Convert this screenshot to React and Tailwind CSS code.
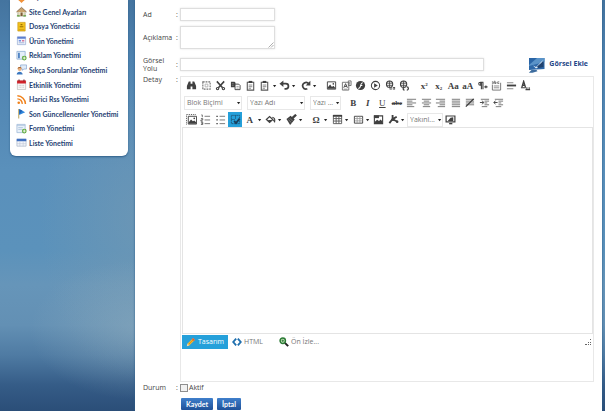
import React from "react";

const Svg = ({ children, className = "h-3 w-3" }) => (
  <svg viewBox="0 0 12 12" className={className + " shrink-0"} fill="none" stroke="none" aria-hidden="true">
    {children}
  </svg>
);

const D = "#404040";
const G = "#8a8a8a";

/* Sidebar icons */
const menuIcons = {
  page: <path d="M3 3h6v6l-3 3-3-3z" fill="#f0913a" />,
  home: (
    <>
      <path d="M2 6h8v5H2z" fill="#e6dfc4" stroke="#8a8a6a" strokeWidth=".6" />
      <path d="M.5 6.500 6 1.500l5.500 5" fill="#c9a36b" stroke="#8a6a4a" strokeWidth="1" />
      <path d="M5 7h2.200v4H5z" fill="#7d5b36" />
      <path d="M1 10h3v1.500H1zM8 10h3v1.500H8z" fill="#5f9e3e" />
    </>
  ),
  cabinet: (
    <>
      <path d="M2 1.500h8v9.500H2z" fill="#f2c11d" stroke="#c8930a" strokeWidth=".7" />
      <path d="M3 9.500h6" stroke="#c8930a" strokeWidth=".8" />
      <path d="M5 3.200h2v1.300H5zM4 5.700h4v1H4z" fill="#9a7000" />
    </>
  ),
  product: (
    <>
      <path d="M1.500 2h9v8.500h-9z" fill="#eef3fb" stroke="#8fa4cf" strokeWidth=".7" />
      <path d="M1.500 2h9v2h-9z" fill="#5c7fd0" />
      <path d="M3 5.500h2.500V7H3z" fill="#6f8fe0" />
      <path d="M6.500 5.500H9V7H6.500z" fill="#d77a9a" />
      <path d="M3 8h6v1H3z" fill="#a9b8d8" />
    </>
  ),
  ad: (
    <>
      <path d="M1 1.500h9v8.500H1z" fill="#e4eef9" stroke="#85a7d0" strokeWidth=".8" />
      <path d="M2.200 3h2v6h-2z" fill="#4f83c4" />
      <circle cx="9" cy="8.800" r="2.600" fill="#5ca83a" />
      <path d="M9 7.200v3.200M7.400 8.800h3.200" stroke="#fff" strokeWidth=".9" />
    </>
  ),
  faq: (
    <>
      <path d="M5 1h6.500v4.500H8.500L7 7V5.500H5z" fill="#dfeaf8" stroke="#7d9cc8" strokeWidth=".7" />
      <circle cx="4" cy="5.500" r="2.200" fill="#e9b283" />
      <path d="M1.700 5.200C1.700 2.500 6.200 2.500 6.200 5L4 4.300z" fill="#a8642c" />
      <path d="M.8 11.500c0-4 6.400-4 6.400 0z" fill="#3c78c0" />
    </>
  ),
  calendar: (
    <>
      <path d="M1.500 2h9v9.500h-9z" fill="#f7f7f7" stroke="#b5b5b5" strokeWidth=".7" />
      <path d="M1.200 1.500h9.600V5H1.200z" fill="#d1232a" />
      <path d="M3.300.5v2M8.700.5v2" stroke="#6b1014" />
      <path d="M3 7h6M3 9h6" stroke="#c8c8c8" strokeDasharray="1 .6" />
    </>
  ),
  rss: (
    <>
      <circle cx="3" cy="9.500" r="1.400" fill="#f08019" />
      <path d="M1.500 5.300a5.300 5.300 0 0 1 5.300 5.500M1.500 2a9 9 0 0 1 8.800 8.800" stroke="#f08019" strokeWidth="1.600" />
    </>
  ),
  flag: (
    <>
      <path d="M3 1v10.500" stroke="#b9a15a" strokeWidth="1.100" />
      <path d="M3.500 1 10 4.500 3.500 7.500z" fill="#2f86dc" />
      <path d="M3.500 1 7 3l-3.500 4z" fill="#1f62b4" />
    </>
  ),
  form: (
    <>
      <path d="M1 1.500h9v9H1z" fill="#e9f1f9" stroke="#9bb7d6" strokeWidth=".8" />
      <path d="M1 2.500h9M2.500 5h5M2.500 7h4" stroke="#a9c1dc" strokeWidth=".9" />
      <circle cx="9" cy="8.800" r="2.600" fill="#5ca83a" />
      <path d="M9 7.200v3.200M7.400 8.800h3.200" stroke="#fff" strokeWidth=".9" />
    </>
  ),
  list: (
    <>
      <path d="M1 2.500h10v7.500H1z" fill="#f4f6fa" stroke="#a2afc4" strokeWidth=".7" />
      <path d="M.8 2h10.400v2.600H.8z" fill="#3f6fc0" />
      <path d="M4.200 5v5M7.800 5v5M1 7.300h10" stroke="#b9c3d3" strokeWidth=".6" />
    </>
  ),
};

const menu = [
  ["page", "Sayfa Yönetimi"],
  ["home", "Site Genel Ayarları"],
  ["cabinet", "Dosya Yöneticisi"],
  ["product", "Ürün Yönetimi"],
  ["ad", "Reklam Yönetimi"],
  ["faq", "Sıkça Sorulanlar Yönetimi"],
  ["calendar", "Etkinlik Yönetimi"],
  ["rss", "Harici Rss Yönetimi"],
  ["flag", "Son Güncellenenler Yönetimi"],
  ["form", "Form Yönetimi"],
  ["list", "Liste Yönetimi"],
];

const globe = (
  <>
    <circle cx="5" cy="4.500" r="3.400" stroke={D} strokeWidth="1.200" />
    <path d="M2 3.500h6M2 5.800h6M5 1v7" stroke={D} strokeWidth=".9" />
  </>
);
const clipboard = (
  <>
    <path d="M2.500 2.500h7v8.500h-7z" stroke="#5a5a5a" strokeWidth="1.200" />
    <path d="M4 1h4v2.300H4z" fill={D} />
    <path d="M4 5.500h4M4 7.300h4M4 9h2.500" stroke="#777" strokeWidth=".9" />
  </>
);
const picture = (
  <>
    <path d="M1.500 2h9v8h-9z" stroke={D} />
    <path d="M2 9.500V8l2.500-3L6.500 7.500 8 6.300 10 8.500v1z" fill={D} />
    <circle cx="8" cy="4.300" r=".9" fill={D} />
  </>
);
const lines = (rows) => <path d={rows} stroke="#707070" strokeWidth="1" />;

/* Editor toolbar icons */
const icons = {
  find: <path d="M3 1.500h2V4h2V1.500h2l2 5V10H7V7H5v3H1V6.500z" fill={D} />,
  selectAll: (
    <>
      <path d="M2 2h8v8H2z" stroke="#6f6f6f" strokeWidth="1.200" strokeDasharray="2 1" />
      <path d="M4.500 4.500h3v3h-3z" stroke="#b0b0b0" />
    </>
  ),
  cut: (
    <>
      <path d="M2 1.500 8.300 8.500M10 1.500 3.700 8.500" stroke={D} strokeWidth="1.700" />
      <circle cx="2.800" cy="9.400" r="1.300" stroke={D} strokeWidth="1.200" />
      <circle cx="9.200" cy="9.400" r="1.300" stroke={D} strokeWidth="1.200" />
    </>
  ),
  copy: (
    <>
      <path d="M1 2h4l1 1v5H1z" fill={D} />
      <path d="M5.500 4.500h4l1.500 1.500v4.500H5.500z" fill="#fff" stroke={D} />
      <path d="M7 7h2.500M7 8.800h2.500M2 4h2M2 5.800h2" stroke={G} strokeWidth=".8" />
    </>
  ),
  paste: clipboard,
  undo: (
    <>
      <path d="M3 4h4.500a2.800 2.800 0 0 1 0 5.600H6" stroke={D} strokeWidth="1.900" />
      <path d="M.5 4 4.800.500v7z" fill={D} />
    </>
  ),
  redo: (
    <>
      <path d="M9.500 4.200A3.600 3.600 0 1 0 8 9.600" stroke={D} strokeWidth="1.900" />
      <path d="M11.300.8V6H6.200z" fill={D} />
    </>
  ),
  image: picture,
  template: (
    <>
      <path d="M1.500 2.500h7v8.500h-7zM8 1h3v5H8z" stroke="#707070" />
      <path d="M3 8.500 5 4l2 4.500M3.800 7h2.500" stroke={D} />
      <path d="M3 10h4M9.500 2v3" stroke={G} />
    </>
  ),
  flash: (
    <>
      <circle cx="6" cy="6" r="5" fill={D} />
      <path d="M8.500 3C6 3 6.500 6 5.500 8c-.5 1-1 1.200-2 1.200M5.500 6h2.500" stroke="#fff" strokeWidth="1.100" />
    </>
  ),
  media: (
    <>
      <circle cx="6" cy="6" r="4.500" stroke={D} strokeWidth="1.100" />
      <path d="M4.500 3.500 8.500 6l-4 2.500z" fill={D} />
    </>
  ),
  link: (
    <>
      {globe}
      <path d="M5 9h2.500M8.500 9H11" stroke={D} strokeWidth="2.600" />
      <path d="M5.500 9h5" stroke="#ddd" strokeWidth=".8" />
    </>
  ),
  unlink: (
    <>
      {globe}
      <path d="M6 8a1.500 1.500 0 1 0 0 3M8.500 7.500a1.700 1.700 0 1 1 0 3.500" stroke={D} strokeWidth="1.400" />
    </>
  ),
  rtl: (
    <>
      <path d="M7 2.500H3.500a1.500 1.500 0 0 0 0 3.200H4V2.500h.8V10M6.500 2.500V10" stroke={D} strokeWidth="1.200" />
      <path d="M8 7.500h3.500M9.700 6v3" stroke={D} strokeWidth="1.200" />
    </>
  ),
  snippet: (
    <>
      <path d="M1.500 5v6h9V3" stroke="#707070" />
      <path d="M3 6.500h6M3 8.500h6" stroke={G} />
      <path d="M1 3.500h1.500M1 2h1.500v2M4 .8v3h1.500V2.300H4M9 2H7.300v1.800H9" stroke={D} strokeWidth=".7" />
    </>
  ),
  rule: (
    <>
      <path d="M1 6h10" stroke={D} strokeWidth="2" />
      <path d="M1 3h7M1 9.500h7" stroke={G} strokeWidth="1.200" />
    </>
  ),
  clean: (
    <>
      <path d="M2 8 4 1.500 6 8M2.800 5.700h2.400" stroke={D} strokeWidth="1.500" />
      <path d="M1 8.500h5.500M7.500 8v2.500M10 8v2.500M6 10.500h5" stroke={D} strokeWidth="1.200" />
    </>
  ),
  left: lines("M1 2.500h10M1 4.500h6M1 6.500h10M1 8.500h6M1 10.500h8"),
  center: lines("M1 2.500h10M3 4.500h6M1 6.500h10M3 8.500h6M2 10.500h8"),
  right: lines("M1 2.500h10M5 4.500h6M1 6.500h10M5 8.500h6M3 10.500h8"),
  justify: lines("M2 2.500h9M2 4.500h9M2 6.500h9M2 8.500h9M2 10.500h9"),
  none: (
    <>
      {lines("M2 2.500h9M2 4.500h9M2 6.500h9M2 8.500h9")}
      <path d="M2 10.500 10.500 2" stroke="#333" strokeWidth="1.300" />
    </>
  ),
  indent: (
    <>
      {lines("M2 2.500h9M6 4.500h5M6 6.500h3M6 8.500h5M3 10.500h6")}
      <path d="M1 6h4M3.500 4 5 6 3.500 8" stroke={D} />
    </>
  ),
  outdent: (
    <>
      {lines("M2 2.500h9M6 4.500h5M6 6.500h3M6 8.500h5M3 10.500h6")}
      <path d="M1 6h4M2.700 4 1 6l1.700 2" stroke={D} />
    </>
  ),
  absolute: (
    <>
      <path d="M.5 11.500V.5h11" stroke={D} strokeDasharray="1 1" />
      <path d="M2.500 2.500h9v8.500h-9z" stroke={D} />
      <path d="M3 10.500V9l2.500-3L7.500 8 9 7l2 2v1.500z" fill={D} />
      <circle cx="9" cy="4.800" r=".9" fill={D} />
    </>
  ),
  ordered: (
    <>
      {lines("M5 2.500h6M5 6.500h6M5 10.500h6")}
      <path d="M1.500 1h1v2.500M1 5h2v1.500H1v1.300h2M1 9h2v2.500H1M1.500 10.300H3" stroke={D} strokeWidth=".8" />
    </>
  ),
  bullets: (
    <>
      {lines("M5 2.500h6M5 6.500h6M5 10.500h6")}
      <path d="M1.500 1.800H3v1.400H1.500zM1.500 5.800H3v1.400H1.500zM1.500 9.800H3v1.400H1.500z" fill={D} />
    </>
  ),
  borders: (
    <>
      <path d="M1.500 1.500h9v9h-9zM6 1.500v4M1.500 6h4" stroke="#1d5478" strokeDasharray="1.500 .6" />
      <path d="M4.500 7.500 6.500 9.800 10.500 5" stroke="#173f5c" strokeWidth="2" />
    </>
  ),
  fill: (
    <>
      <path d="M1.500 6 5 2.800 8.500 6 5 9.200z" stroke={D} strokeWidth="1.300" />
      <path d="M3 6.500h4.500L5 9z" fill={D} />
      <path d="M8 3.500c2.500.5 3 2.500 2.500 5L9 6.500" stroke={D} strokeWidth="1.200" />
    </>
  ),
  brush: (
    <>
      <path d="M.5 5.500 5 2l4.500 4-5 6z" fill={D} />
      <path d="M7 4.500 11 .8" stroke={D} strokeWidth="2.600" />
      <path d="M2.500 6 6 9.500M4 4.500 7 7.500" stroke="#aaa" strokeWidth=".6" />
    </>
  ),
  table: (
    <>
      <path d="M1.500 1.500h9v9h-9zM1.500 5h9M1.500 7.700h9M4.500 3v7.500M7.500 3v7.500" stroke="#5a5a5a" />
      <path d="M1 1h10v2H1z" fill={D} />
    </>
  ),
  columns: (
    <>
      <path d="M1.500 2.500h9v7.500h-9z" stroke={D} />
      <path d="M4.500 2.500V10M7.500 2.500V10M2 5h8.500M2 7.500h8.500" stroke="#999" strokeWidth=".9" />
    </>
  ),
  gallery: (
    <>
      <path d="M1.500 2h9v8.500h-9z" stroke={D} strokeWidth="1.200" />
      <path d="M1 1.500h5.500v3H1z" fill={D} />
      <path d="M2 10V8.500l2.500-2.300 2 1.300L8.500 6 10 8v2z" fill={D} />
    </>
  ),
  tools: (
    <>
      <path d="M5 1v4.500L1.500 10M5.500 6l5 2.500M6 5l3.500-2" stroke={D} strokeWidth="2" />
      <circle cx="5.300" cy="6" r="1.700" fill={D} />
      <circle cx="10" cy="8.500" r="1.400" fill={D} />
    </>
  ),
  screen: (
    <>
      <path d="M1.200 2.200h9.600V8.500H1.200z" stroke={D} strokeWidth="1.300" />
      <path d="M4.500 10.500h3.500" stroke={D} strokeWidth="1.500" />
      <path d="M3 7.500 6 4l3-.5v4z" fill={D} />
    </>
  ),
};

const glyphs = {
  sup: <>x<sup className="text-[5px] leading-none">2</sup></>,
  sub: <>x<sub className="text-[5px] leading-none">2</sub></>,
  upper: "Aa",
  lower: "aA",
  bold: "B",
  italic: <i>I</i>,
  underline: <u className="font-normal">U</u>,
  strike: <s className="text-[7px]">abc</s>,
  color: "A",
  omega: "Ω",
};

function Tool({ name, active }) {
  return (
    <button
      type="button"
      aria-label={name}
      className={
        "flex h-[15px] min-w-0 flex-1 items-center justify-center font-['Liberation_Serif',serif] text-[9px] leading-[10px] font-bold text-[#404040] " +
        (active ? "bg-[#25a0da]" : "")
      }
    >
      {icons[name] ? <Svg className="h-[11px] w-[11px]">{icons[name]}</Svg> : <span>{glyphs[name]}</span>}
    </button>
  );
}

const Caret = () => (
  <svg viewBox="0 0 5 4" className="h-1 w-[5px] shrink-0" aria-hidden="true">
    <path d="M1 1h3.200L2.600 3.200z" fill="#222" />
  </svg>
);

const More = ({ label }) => (
  <button type="button" aria-label={label} className="flex h-[15px] w-[5px] items-center">
    <Caret />
  </button>
);

const Split = ({ name }) => (
  <div className="flex w-[19px]">
    <Tool name={name} />
    <More label={name + " seçenekleri"} />
  </div>
);

const Tools = ({ names, className, active }) => (
  <div className={"flex " + className}>
    {names.map((n, i) => (
      <Tool key={n + i} name={n} active={n === active} />
    ))}
  </div>
);

const Select = ({ label, text, className }) => (
  <div className={"relative flex items-center " + className}>
    <select
      aria-label={label}
      className="h-[14px] w-full appearance-none border border-[#e8e8e8] bg-white pl-[2px] text-[7px] leading-[10px] text-[#777]"
    >
      <option>{text}</option>
    </select>
    <span className="pointer-events-none absolute right-[1px] flex">
      <Caret />
    </span>
  </div>
);

const Row = ({ label, htmlFor, className = "", align = "items-center", children }) => (
  <div className={"grid grid-cols-[33px_4px_1fr] " + align + " " + className}>
    <label htmlFor={htmlFor} className="leading-[8px]">{label}</label>
    <span className="leading-[8px]">:</span>
    {children}
  </div>
);

const field = "border border-[#dedede] bg-white shadow-[0_0_2px_#e4e4e4] outline-none";
const tab = "flex h-[14px] items-center gap-[2px] px-1 text-[7px]";
const action =
  "h-3 rounded-[1px] bg-linear-to-b from-[#3f7fcb] to-[#1f5199] px-1 font-['Lato',sans-serif] text-[7px] leading-[12px] font-bold text-white";

export default function App() {
  return (
    <div className="flex min-h-screen items-stretch bg-[radial-gradient(ellipse_110px_70px_at_140px_330px,#93b0c080,#93b0c000),radial-gradient(ellipse_100px_160px_at_140px_220px,#7a9bb080,#7a9bb000),linear-gradient(to_bottom,#44749f_0,#4f83b0_60px,#5a90bb_170px,#5b92bb_250px,#6695b9_285px,#6390b4_325px,#4f7ba3_355px,#355c87_385px,#2b4e78_411px)] pr-[3px] font-['Open_Sans',sans-serif] text-[7px] text-[#444]">
      <aside className="w-[135px] shrink-0 pr-[7px] pl-[10px]">
        <nav className="flex h-[156px] flex-col justify-end overflow-hidden rounded-b-[6px] bg-white pb-[6px] pl-[6px] shadow-[0_1px_2px_#2f5f8a]">
          <ul className="grid h-[160px] shrink-0 auto-rows-fr font-['Lato',sans-serif] font-bold text-[#1f3f73]">
            {menu.map(([icon, text]) => (
              <li key={text} className="flex items-center">
                <a href="#" className="flex items-center gap-[2px] leading-[10px] whitespace-nowrap">
                  <Svg className="h-[11px] w-[11px]">{menuIcons[icon]}</Svg>
                  {text}
                </a>
              </li>
            ))}
          </ul>
        </nav>
      </aside>

      <main className="min-w-0 flex-1 bg-white px-2 pt-2 shadow-[0_0_2px_#2b5a86]">
        <form>
          <Row label="Ad" htmlFor="ad">
            <input id="ad" type="text" className={field + " h-[13px] w-[95px]"} />
          </Row>
          <Row label="Açıklama" htmlFor="aciklama" className="mt-[5px]">
            <div className="relative w-[95px]">
              <textarea id="aciklama" className={field + " block h-[23px] w-full resize-none"} />
              <svg viewBox="0 0 6 6" className="pointer-events-none absolute right-[1px] bottom-[1px] h-[6px] w-[6px]" aria-hidden="true">
                <path d="M.5 5.500l5-5M3 5.500l2.500-2.500" stroke="#999" strokeWidth=".8" />
              </svg>
            </div>
          </Row>
          <Row label="Görsel Yolu" htmlFor="yol" className="mt-[5px] h-[21px]">
            <div className="flex items-center pr-[6px]">
              <input id="yol" type="text" className={field + " h-[13px] min-w-0 flex-1"} />
              <a href="#" className="ml-11 flex items-center gap-1 font-bold whitespace-nowrap text-[#1f4788]">
                <svg viewBox="0 0 17 16" className="h-4 w-[17px]" aria-hidden="true">
                  <path d="M1 1h15.500v11L1 13z" fill="#2d68a8" />
                  <path d="M1 1h15.500v4L1 9z" fill="#5a93c8" />
                  <path d="M1 1h8L1 8z" fill="#2a65a6" />
                  <path d="m5 8.500 3 1.500 7-7-3 6-4 2.500z" fill="#e2eefa" />
                  <path d="M9 9.500 15.500 4v6l-5 1z" fill="#21436f" />
                  <path d="M3.500 13h5l1 1.200-5 1.600H.8z" fill="#3d6c9e" />
                </svg>
                Görsel Ekle
              </a>
            </div>
          </Row>
          <Row label="Detay" htmlFor="detay" align="items-start" className="mt-[1px]">
            <div className="border border-[#e8e8e8]">
              <div className="flex flex-col gap-[2px] pt-[1px] pl-[3px]">
                <div className="flex">
                  <Tools className="w-[88px]" names={["find", "selectAll", "cut", "copy", "paste", "paste"]} />
                  <More label="Yapıştır seçenekleri" />
                  <div className="flex gap-[2px]">
                    <Split name="undo" />
                    <Split name="redo" />
                  </div>
                  <Tools className="ml-[7px] w-[88px]" names={["image", "template", "flash", "media", "link", "unlink"]} />
                  <Tools className="ml-[5px] w-[116px]" names={["sup", "sub", "upper", "lower", "rtl", "snippet", "rule", "clean"]} />
                </div>
                <div className="flex">
                  <div className="flex gap-[5px]">
                    <Select label="Blok Biçimi" text="Blok Biçimi" className="w-[58px]" />
                    <Select label="Yazı Adı" text="Yazı Adı" className="w-[58px]" />
                    <Select label="Yazı Boyutu" text="Yazı ..." className="w-[31px]" />
                  </div>
                  <Tools
                    className="ml-[5px] w-[160px]"
                    names={["bold", "italic", "underline", "strike", "left", "center", "right", "justify", "none", "indent", "outdent"]}
                  />
                </div>
                <div className="flex">
                  <Tools className="w-[73px]" active="borders" names={["absolute", "ordered", "bullets", "borders", "color"]} />
                  <More label="Renk seçenekleri" />
                  <div className="ml-[1px] flex gap-[2px]">
                    <Split name="fill" />
                    <Split name="brush" />
                  </div>
                  <div className="ml-[6px] flex gap-[2px]">
                    <Split name="omega" />
                    <Split name="table" />
                    <Split name="columns" />
                  </div>
                  <Tools className="ml-[1px] w-[15px]" names={["gallery"]} />
                  <Split name="tools" />
                  <Select label="Yakınlaştır" text="Yakınl..." className="ml-[2px] w-[36px]" />
                  <Tools className="w-[15px]" names={["screen"]} />
                </div>
              </div>
              <textarea id="detay" className="ml-[1px] block h-[207px] w-[calc(100%-1px)] resize-none border border-[#e4e4e4] bg-white outline-none" />
              <div className="flex h-[47px] items-start pt-[1px] pr-[1px] pl-[1px] text-[#777]">
                <button type="button" className={tab + " w-[46px] bg-[#25a0da] text-white"}>
                  <Svg className="h-[10px] w-[10px]">
                    <path d="M1 11 2 7.800 8.500 1.300l2.200 2.200L4.200 10z" fill="#f5b52e" />
                    <path d="m8.500 1.300 2.200 2.200-1.400 1.400-2.200-2.200z" fill="#e2574c" />
                    <path d="M1 11 2 7.800 4.200 10z" fill="#f6e0b5" />
                    <path d="m3 9 6.400-6.400" stroke="#c97e12" strokeWidth=".7" />
                  </Svg>
                  Tasarım
                </button>
                <button type="button" className={tab}>
                  <Svg className="h-[10px] w-[10px]">
                    <path d="M5 2 1.500 6 5 10M7 2l3.500 4L7 10" stroke="#1f6fae" strokeWidth="2.200" />
                  </Svg>
                  HTML
                </button>
                <button type="button" className={tab + " ml-2"}>
                  <Svg className="h-[10px] w-[10px]">
                    <path d="m7 7 4 4" stroke="#222" strokeWidth="2.400" />
                    <circle cx="4.500" cy="4.500" r="3.200" fill="#cfe8c4" stroke="#2a7a34" strokeWidth="1.800" />
                    <path d="M3 4.500h3M4.500 3v3" stroke="#2a7a34" />
                  </Svg>
                  Ön İzle...
                </button>
                <svg viewBox="0 0 7 7" className="mt-1 ml-auto h-[7px] w-[7px]" aria-hidden="true">
                  <path d="M5 0h1v1H5zM3 3h1v1H3zM5 3h1v1H5zM0 5h2v1H0zM3 5h1v1H3zM5 5h1v1H5z" fill="#666" />
                </svg>
              </div>
            </div>
          </Row>
          <Row label="Durum" htmlFor="aktif" className="mt-[1px] h-[10px]">
            <div className="flex items-center">
              <input
                id="aktif"
                type="checkbox"
                className="h-2 w-2 appearance-none border border-[#8f8f8f] bg-[#f2f2f2] checked:bg-[#3f7fcb]"
              />
              <label htmlFor="aktif" className="ml-[1px] leading-[8px]">Aktif</label>
            </div>
          </Row>
          <div className="mt-[5px] flex gap-1 pl-[38px]">
            <button type="submit" className={action + " w-8"}>Kaydet</button>
            <button type="button" className={action + " w-6"}>İptal</button>
          </div>
        </form>
      </main>
    </div>
  );
}
